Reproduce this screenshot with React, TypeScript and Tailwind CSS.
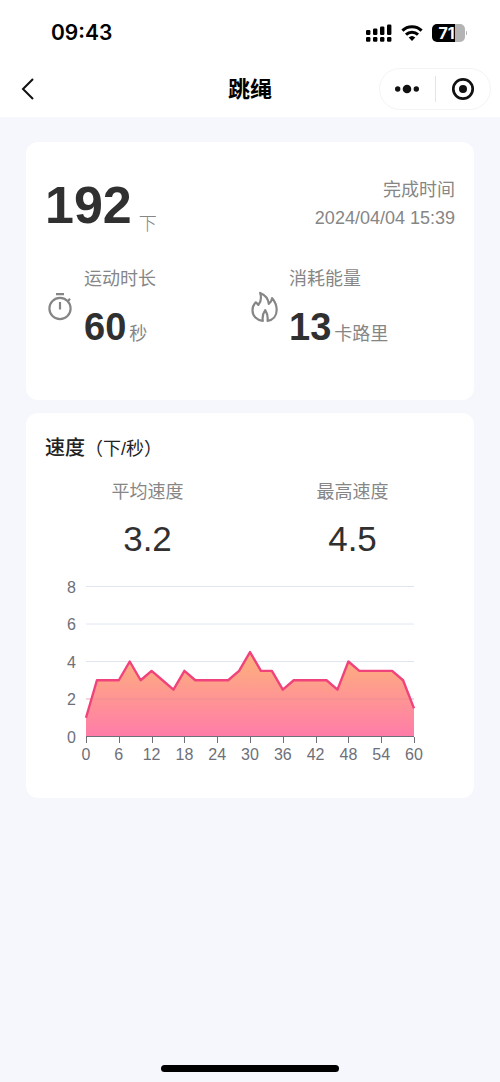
import React from "react";

const speeds = [
  1, 3, 3, 3, 4, 3, 3.5, 3, 2.5, 3.5, 3, 3, 3, 3, 3.5, 4.5, 3.5, 3.5, 2.5, 3, 3,
  3, 3, 2.5, 4, 3.5, 3.5, 3.5, 3.5, 3, 1.5,
];

const SignalIcon = () => (
  <svg width="26" height="18" viewBox="0 0 26 18" fill="#000" aria-hidden="true">
    <rect x="0" y="6" width="4.400" height="5" rx="1.2" />
    <rect x="7" y="4.5" width="4.400" height="6.5" rx="1.2" />
    <rect x="14" y="2.5" width="4.400" height="8.5" rx="1.2" />
    <rect x="21" y="0.5" width="4.400" height="10.5" rx="1.2" />
    <rect x="0" y="13" width="4.400" height="4.8" rx="1.2" />
    <rect x="7" y="13" width="4.400" height="4.8" rx="1.2" />
    <rect x="14" y="13" width="4.400" height="4.8" rx="1.2" />
    <rect x="21" y="13" width="4.400" height="4.8" rx="1.2" />
  </svg>
);

const WifiIcon = () => (
  <svg width="22" height="18" viewBox="0 0 22 18" fill="none" stroke="#000" strokeWidth="3" aria-hidden="true">
    <path d="M1.4 6.6a13.8 13.8 0 0 1 19.2 0" />
    <path d="M5 10.6a8.6 8.6 0 0 1 12 0" />
    <path d="M7.7 13.6a4.8 4.8 0 0 1 6.6 0L11 17z" fill="#000" stroke="none" />
  </svg>
);

const TimerIcon = () => (
  <svg width="28" height="32" viewBox="0 0 28 32" fill="none" stroke="#868686" strokeWidth="2.2" aria-hidden="true">
    <circle cx="15" cy="17.5" r="10.6" />
    <path d="M11 3.2h8M15 11v7.5M22.6 10.4l2.4-2.6" />
  </svg>
);

const FlameIcon = () => (
  <svg
    width="28"
    height="32"
    viewBox="0 0 28 32"
    fill="none"
    stroke="#868686"
    strokeWidth="2.2"
    strokeLinejoin="round"
    strokeLinecap="round"
    aria-hidden="true"
  >
    <path d="M12.8 29.8C6.800 29.200 2.500 25 2.500 19.200c0-3.100 1.200-5.700 3.300-7.900l2.600 2.600c2.600-3.200 3.200-7.300 1.800-12 4.600 1.800 8 5.600 8.600 11 1.800-1.200 2.900-3.200 3.300-5.700 2.900 3.200 4.600 7.200 4.600 11.600 0 6-3.600 10.200-9.100 11 .4-3.900-.3-7.400-2.400-10.600-2.200 3-3 6.400-2.400 10.600z" />
  </svg>
);

const SpeedChart = () => {
  const x = (sec: number) => 41 + (sec * 328) / 60;
  const y = (value: number) => 177.5 - value * 18.75;
  const line = speeds.map((v, i) => `${x(i * 2)},${y(v)}`).join(" ");
  return (
    <svg className="block w-full h-auto" viewBox="0 0 410 210" role="img" aria-label="速度曲线">
      <defs>
        <linearGradient id="speed-fill" x1="0" y1="0" x2="0" y2="1">
          <stop offset="0" stopColor="#fdae72" />
          <stop offset="1" stopColor="#ff74a3" />
        </linearGradient>
      </defs>
      {[2, 4, 6, 8].map((v) => (
        <line key={v} x1={x(0)} x2={x(60)} y1={y(v)} y2={y(v)} stroke="#e0e6f1" />
      ))}
      <polygon points={`${x(0)},${y(0)} ${line} ${x(60)},${y(0)}`} fill="url(#speed-fill)" fillOpacity="0.94" />
      <line x1={x(0)} x2={x(60)} y1={y(2)} y2={y(2)} stroke="#e58a92" strokeOpacity="0.5" />
      <polyline points={line} fill="none" stroke="#f0437b" strokeWidth="2.4" strokeLinejoin="round" />
      <line x1={x(0)} x2={x(60)} y1={y(0)} y2={y(0)} stroke="#6e7079" />
      <g className="text-base" fill="#6e7079">
        {[0, 2, 4, 6, 8].map((v) => (
          <text key={v} x="31" y={y(v) + 6} textAnchor="end">
            {v}
          </text>
        ))}
        {[0, 6, 12, 18, 24, 30, 36, 42, 48, 54, 60].map((s) => (
          <g key={s}>
            <line x1={Math.round(x(s)) + 0.5} x2={Math.round(x(s)) + 0.5} y1="178" y2="184" stroke="#6e7079" />
            <text x={x(s)} y="201" textAnchor="middle">
              {s}
            </text>
          </g>
        ))}
      </g>
    </svg>
  );
};

type MetricProps = {
  icon: React.ReactNode;
  label: string;
  value: string;
  unit: string;
};

const Metric = ({ icon, label, value, unit }: MetricProps) => (
  <div className="flex items-center gap-[11px]">
    {icon}
    <div>
      <p className="text-lg leading-7 text-[#868686]">{label}</p>
      <p className="mt-[15px] flex items-baseline gap-[3px]">
        <span className="text-[38px] leading-[38px] font-bold text-[#303030]">{value}</span>
        <span className="text-lg leading-7 text-[#868686]">{unit}</span>
      </p>
    </div>
  </div>
);

export default function App() {
  return (
    <div className="flex min-h-screen flex-col bg-[#f6f7fc] font-['Liberation_Sans','Noto_Sans_CJK_SC',sans-serif]">
      <header className="bg-white">
        <div className="flex h-[60px] items-center justify-between pt-[6px] pr-[33px] pl-[51px]">
          <span className="font-['Inter',sans-serif] text-[21px] font-semibold text-black">09:43</span>
          <div className="flex items-center gap-[9px]">
            <SignalIcon />
            <WifiIcon />
            <div className="flex items-center gap-px">
              <div className="flex h-[18px] w-[33px] items-center justify-center rounded-[5px] bg-linear-to-r from-black from-70% to-[#b4b4b4] to-70% pr-1 font-['Inter',sans-serif] text-base leading-none font-bold text-white">
                71
              </div>
              <span className="h-1 w-px rounded-full bg-[#b4b4b4]" />
            </div>
          </div>
        </div>

        <div className="grid h-[57px] grid-cols-[1fr_auto_1fr] items-center px-[9px]">
          <button type="button" aria-label="返回" className="justify-self-start pl-[11px]">
            <svg width="16" height="24" viewBox="0 0 16 24" fill="none" stroke="#111" strokeWidth="2" aria-hidden="true">
              <path d="M13 2L3 12l10 10" />
            </svg>
          </button>
          <h1 className="pt-[2px] text-[22px] font-bold text-black">跳绳</h1>
          <div className="flex h-[42px] w-[112px] items-center justify-self-end rounded-full border border-[#f4f4f4]">
            <button type="button" aria-label="更多" className="flex flex-1 justify-center">
              <svg width="26" height="24" viewBox="0 0 26 24" fill="#111" aria-hidden="true">
                <circle cx="3.700" cy="12" r="2.700" />
                <circle cx="13" cy="12" r="4.300" />
                <circle cx="22.300" cy="12" r="2.700" />
              </svg>
            </button>
            <span className="h-[26px] w-px bg-[#e4e4e4]" />
            <button type="button" aria-label="关闭" className="flex flex-1 justify-center">
              <svg width="24" height="24" viewBox="0 0 24 24" aria-hidden="true">
                <circle cx="12" cy="12" r="9.700" fill="none" stroke="#111" strokeWidth="2.700" />
                <circle cx="12" cy="12" r="4" fill="#111" />
              </svg>
            </button>
          </div>
        </div>
      </header>

      <main className="flex flex-1 flex-col gap-[13px] px-[26px] pt-[25px]">
        <section className="rounded-xl bg-white px-[19px] pt-[30px] pb-[52px]">
          <div className="flex justify-between">
            <p className="flex items-end gap-[7px]">
              <span className="text-[52px] leading-[66px] font-bold text-[#303030]">192</span>
              <span className="text-lg leading-7 font-light text-[#868686]">下</span>
            </p>
            <div className="pt-1 text-right text-lg leading-7 text-[#868686]">
              <p>完成时间</p>
              <p>2024/04/04 15:39</p>
            </div>
          </div>
          <div className="mt-[27px] grid grid-cols-2">
            <Metric icon={<TimerIcon />} label="运动时长" value="60" unit="秒" />
            <Metric icon={<FlameIcon />} label="消耗能量" value="13" unit="卡路里" />
          </div>
        </section>

        <section className="rounded-xl bg-white px-[19px] pt-[21px] pb-[29px]">
          <h2 className="text-xl leading-7 font-medium text-[#222]">
            速度<span className="text-lg leading-7 font-normal">（下/秒）</span>
          </h2>
          <div className="mt-[15px] grid grid-cols-2 text-center">
            <div>
              <p className="text-lg leading-7 text-[#868686]">平均速度</p>
              <p className="mt-[13px] text-[35px] leading-[40px] text-[#303030]">3.2</p>
            </div>
            <div>
              <p className="text-lg leading-7 text-[#868686]">最高速度</p>
              <p className="mt-[13px] text-[35px] leading-[40px] text-[#303030]">4.5</p>
            </div>
          </div>
          <SpeedChart />
        </section>
      </main>

      <footer className="flex justify-center pb-[10px]">
        <div className="h-[7px] w-[178px] rounded-full bg-black" />
      </footer>
    </div>
  );
}
